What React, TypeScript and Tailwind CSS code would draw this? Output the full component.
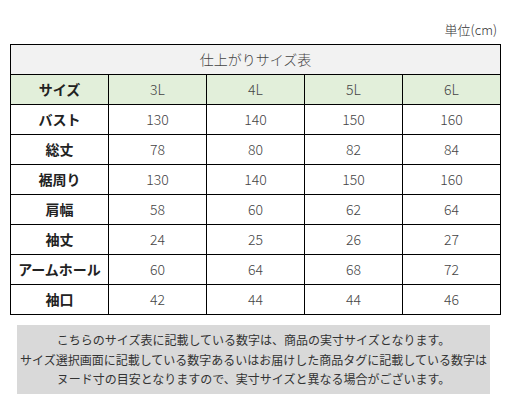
import React from "react";

const sizes = ["3L", "4L", "5L", "6L"];

const rows: [string, number[]][] = [
  ["バスト", [130, 140, 150, 160]],
  ["総丈", [78, 80, 82, 84]],
  ["裾周り", [130, 140, 150, 160]],
  ["肩幅", [58, 60, 62, 64]],
  ["袖丈", [24, 25, 26, 27]],
  ["アームホール", [60, 64, 68, 72]],
  ["袖口", [42, 44, 44, 46]],
];

export default function App() {
  return (
    <div
      className="w-[508px] h-[415px] bg-white text-[#333]"
      style={{ fontFamily: '"Noto Sans CJK JP", "Noto Sans", sans-serif' }}
    >
      <p className="pt-[22px] pr-[11px] text-right text-[13px] leading-[16px] font-light">単位(cm)</p>

      <table className="mt-[6px] ml-[10px] w-[491px] border-collapse table-fixed text-[14px]">
        <tbody>
          <tr className="h-[30px] bg-[#f2f2f2]">
            <td colSpan={5} className="border border-black text-center font-light text-[#444]">
              仕上がりサイズ表
            </td>
          </tr>
          <tr className="h-[30px] bg-[#e2efda]">
            <td className="w-[98px] border border-black text-center font-bold text-[#222]">サイズ</td>
            {sizes.map((s) => (
              <td key={s} className="border border-black text-center font-light text-[#444]">
                {s}
              </td>
            ))}
          </tr>
          {rows.map(([label, vals]) => (
            <tr key={label} className="h-[30px]">
              <td className="border border-black text-center font-bold text-[#222] whitespace-nowrap">
                {label}
              </td>
              {vals.map((v, i) => (
                <td key={i} className="border border-black text-center font-light text-[#444]">
                  {v}
                </td>
              ))}
            </tr>
          ))}
        </tbody>
      </table>

      <div className="mt-[10px] ml-[17px] w-[473px] bg-[#d9d9d9] py-[5px] text-center text-[12px] leading-[19.5px] text-[#333]">
        <p>こちらのサイズ表に記載している数字は、商品の実寸サイズとなります。</p>
        <p>サイズ選択画面に記載している数字あるいはお届けした商品タグに記載している数字は</p>
        <p>ヌード寸の目安となりますので、実寸サイズと異なる場合がございます。</p>
      </div>
    </div>
  );
}
